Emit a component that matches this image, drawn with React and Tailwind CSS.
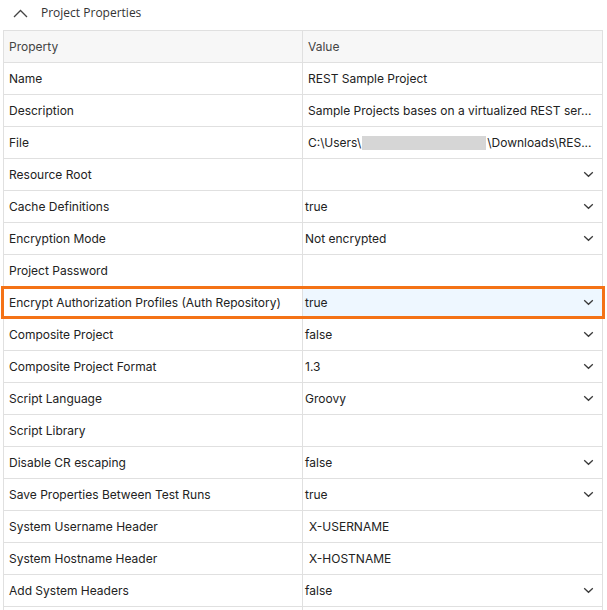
import React from "react";

const rows = [
  { k: "Name", v: "REST Sample Project", t: "text" },
  { k: "Description", v: "Sample Projects bases on a virtualized REST ser...", t: "text" },
  { k: "File", v: "file", t: "file" },
  { k: "Resource Root", v: "", t: "select" },
  { k: "Cache Definitions", v: "true", t: "select" },
  { k: "Encryption Mode", v: "Not encrypted", t: "select" },
  { k: "Project Password", v: "", t: "text" },
  { k: "Encrypt Authorization Profiles (Auth Repository)", v: "true", t: "select", hl: true },
  { k: "Composite Project", v: "false", t: "select" },
  { k: "Composite Project Format", v: "1.3", t: "select" },
  { k: "Script Language", v: "Groovy", t: "select" },
  { k: "Script Library", v: "", t: "text" },
  { k: "Disable CR escaping", v: "false", t: "select" },
  { k: "Save Properties Between Test Runs", v: "true", t: "select" },
  { k: "System Username Header", v: "X-USERNAME", t: "text" },
  { k: "System Hostname Header", v: "X-HOSTNAME", t: "text" },
  { k: "Add System Headers", v: "false", t: "select" },
  { k: "", v: "", t: "text" },
];

function Chevron() {
  return (
    <svg width="11" height="7" viewBox="0 0 11 7" className="shrink-0">
      <path d="M1.2 1.3 L5.5 5.3 L9.8 1.3" fill="none" stroke="#3a3a3a" strokeWidth="1.3" />
    </svg>
  );
}

export default function App() {
  return (
    <div
      className="h-[610px] w-[607px] overflow-hidden bg-white text-[#222]"
      style={{ fontFamily: "Inter, 'Liberation Sans', sans-serif" }}
    >
      <div className="flex h-[30px] items-center pl-[13px] pb-[4px]">
        <svg width="15" height="9" viewBox="0 0 15 9">
          <path d="M1 8 L7.5 1.5 L14 8" fill="none" stroke="#444" strokeWidth="1.3" />
        </svg>
        <span
          className="ml-[13px] text-[12px] text-[#333]"
          style={{ fontFamily: "'Open Sans', sans-serif" }}
        >
          Project Properties
        </span>
      </div>
      <div className="ml-[3px] w-[600px] border-t border-l border-[#e0e0e0]">
        <div className="flex h-[32px] bg-[#f7f7f7] text-[12px] leading-[16px] text-[#444]">
          <div className="flex w-[299px] items-center border-r border-b border-[#e0e0e0] pl-[5px]">Property</div>
          <div className="flex flex-1 items-center border-r border-b border-[#e0e0e0] pl-[5px]">Value</div>
        </div>
        {rows.map((r, i) => (
          <div key={i} className="relative flex h-[32px] text-[12px] leading-[16px]">
            <div className="flex w-[299px] items-center border-r border-b border-[#e0e0e0] pl-[5px]">{r.k}</div>
            <div
              className={
                "flex min-w-0 flex-1 items-center whitespace-nowrap border-r border-b border-[#e0e0e0] " +
                (r.hl ? "bg-[#eef7ff] " : "") +
                (r.t === "select" ? "pl-[2px] pr-[8px]" : "pl-[5px]")
              }
            >
              {r.t === "file" ? (
                <span className="flex items-center">
                  C:\Users\
                  <span className="mx-[1px] inline-block h-[14px] w-[124px] bg-[#d6d6d6]" />
                  \Downloads\RES...
                </span>
              ) : (
                <span className={"flex-1 " + (r.k.startsWith("System") ? "pl-[1px]" : "")}>{r.v}</span>
              )}
              {r.t === "select" && <Chevron />}
            </div>
            {r.hl && (
              <div className="pointer-events-none absolute -left-[3px] -top-[1px] h-[33px] w-[604px] border-[3px] border-[#f47216]" />
            )}
          </div>
        ))}
      </div>
    </div>
  );
}
